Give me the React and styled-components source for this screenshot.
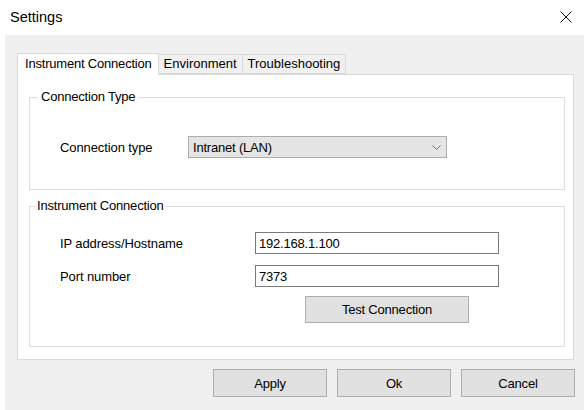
import React from "react";
import styled, { createGlobalStyle } from "styled-components";

const GlobalStyle = createGlobalStyle`
  html, body {
    margin: 0;
    padding: 0;
    background: #ffffff;
  }
  body {
    font-family: "Liberation Sans", Arial, sans-serif;
    font-size: 13px;
    color: #000000;
  }
  * { box-sizing: border-box; }
`;

const Window = styled.div`
  width: 584px;
  height: 410px;
  display: flex;
  flex-direction: column;
  background: #ffffff;
  overflow: hidden;
`;

const TitleBar = styled.div`
  height: 35px;
  flex: none;
  display: flex;
  align-items: center;
  justify-content: space-between;
  padding: 0 6px 1px 10px;
`;

const Title = styled.span`
  font-size: 14.5px;
  color: #000;
`;

const CloseButton = styled.button`
  width: 24px;
  height: 24px;
  border: 0;
  padding: 0;
  background: transparent;
  display: flex;
  align-items: center;
  justify-content: center;
`;

const Body = styled.div`
  flex: 1;
  margin-left: 5px;
  background: #f0f0f0;
  padding: 18px 10px 13px 12px;
  display: flex;
  flex-direction: column;
`;

const TabStrip = styled.div`
  display: flex;
  align-items: flex-end;
  height: 21px;
  position: relative;
  z-index: 1;
`;

const Tab = styled.div`
  height: ${(p) => (p.$active ? "22px" : "20px")};
  margin-bottom: ${(p) => (p.$active ? "-1px" : "0")};
  padding: ${(p) => (p.$active ? "2px 6px 0 7px" : "1px 5px 0 5px")};
  background: ${(p) => (p.$active ? "#ffffff" : "#f0f0f0")};
  border: 1px solid #d9d9d9;
  border-bottom: ${(p) => (p.$active ? "0" : "1px solid #d9d9d9")};
  border-left: ${(p) => (p.$active ? "1px solid #d9d9d9" : "0")};
  letter-spacing: ${(p) => (p.$active ? "-0.2px" : "0")};
  white-space: nowrap;
  line-height: 16px;
`;

const TabPanel = styled.div`
  background: #ffffff;
  border: 1px solid #d9d9d9;
  padding: 14px 8px 12px 11px;
  display: flex;
  flex-direction: column;
  gap: 8px;
`;

const GroupBox = styled.fieldset`
  margin: 0;
  padding: ${(p) => p.$padding};
  border: 1px solid #dcdcdc;
  min-width: 0;
  display: flex;
  flex-direction: column;
  gap: 11px;
`;

const Legend = styled.legend`
  margin-left: ${(p) => p.$indent}px;
  padding: 0 ${(p) => p.$gap}px;
  line-height: 16px;
  letter-spacing: -0.2px;
`;

const FieldRow = styled.div`
  display: grid;
  grid-template-columns: ${(p) => p.$labelWidth}px ${(p) => p.$fieldWidth}px;
  align-items: center;
  padding-left: 30px;
`;

const Label = styled.span`
  letter-spacing: -0.1px;
`;

const Select = styled.div`
  height: 22px;
  background: #e5e5e5;
  border: 1px solid #adadad;
  display: flex;
  align-items: center;
  justify-content: space-between;
  padding: 0 5px 0 4px;
  letter-spacing: -0.2px;
`;

const TextBox = styled.div`
  height: 22px;
  background: #ffffff;
  border: 1px solid #7a7a7a;
  display: flex;
  align-items: center;
  padding-left: 3px;
  letter-spacing: -0.2px;
`;

const ButtonRow = styled.div`
  display: flex;
  padding-left: ${(p) => p.$indent}px;
  margin-top: -2px;
`;

const Button = styled.button`
  width: ${(p) => p.$width}px;
  height: ${(p) => p.$height}px;
  background: #e1e1e1;
  border: 1px solid #adadad;
  font-family: "Liberation Sans", Arial, sans-serif;
  font-size: 13px;
  color: #000;
  letter-spacing: -0.2px;
  padding: 0;
`;

const Footer = styled.div`
  margin-top: 9px;
  display: flex;
  justify-content: flex-end;
  gap: 10px;
  margin-right: -1px;
`;

const CloseIcon = () => (
  <svg width="12" height="12" viewBox="0 0 12 12">
    <path d="M0.5 0.5 L11.5 11.5 M11.5 0.5 L0.5 11.5" stroke="#111" strokeWidth="1" />
  </svg>
);

const Chevron = () => (
  <svg width="9" height="5" viewBox="0 0 9 5">
    <path d="M0.5 0.5 L4.5 4.5 L8.5 0.5" fill="none" stroke="#6d6d6d" strokeWidth="1" />
  </svg>
);

export default function App() {
  return (
    <>
      <GlobalStyle />
      <Window>
        <TitleBar>
          <Title>Settings</Title>
          <CloseButton aria-label="Close">
            <CloseIcon />
          </CloseButton>
        </TitleBar>
        <Body>
          <TabStrip>
            <Tab $active>Instrument Connection</Tab>
            <Tab>Environment</Tab>
            <Tab>Troubleshooting</Tab>
          </TabStrip>
          <TabPanel>
            <GroupBox $padding="31px 0 31px 0">
              <Legend $indent={8} $gap={3}>Connection Type</Legend>
              <FieldRow $labelWidth={128} $fieldWidth={259}>
                <Label>Connection type</Label>
                <Select>
                  <span>Intranet (LAN)</span>
                  <Chevron />
                </Select>
              </FieldRow>
            </GroupBox>
            <GroupBox $padding="18px 0 23px 0">
              <Legend $indent={6} $gap={1}>Instrument Connection</Legend>
              <FieldRow $labelWidth={195} $fieldWidth={244}>
                <Label>IP address/Hostname</Label>
                <TextBox>192.168.1.100</TextBox>
              </FieldRow>
              <FieldRow $labelWidth={195} $fieldWidth={244}>
                <Label>Port number</Label>
                <TextBox>7373</TextBox>
              </FieldRow>
              <ButtonRow $indent={275}>
                <Button $width={164} $height={27}>Test Connection</Button>
              </ButtonRow>
            </GroupBox>
          </TabPanel>
          <Footer>
            <Button $width={114} $height={28}>Apply</Button>
            <Button $width={114} $height={28}>Ok</Button>
            <Button $width={114} $height={28}>Cancel</Button>
          </Footer>
        </Body>
      </Window>
    </>
  );
}
